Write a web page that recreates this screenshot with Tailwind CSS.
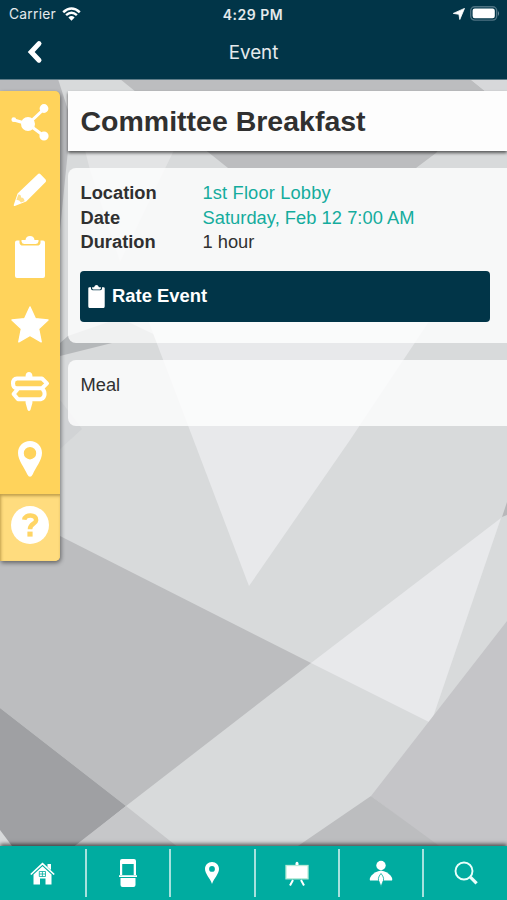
<!DOCTYPE html>
<html lang="en">
<head>
<meta charset="utf-8">
<meta name="viewport" content="width=device-width, initial-scale=1">
<title>Event</title>
<script src="https://cdn.jsdelivr.net/npm/@tailwindcss/browser@4"></script>
</head>
<body class="h-[900px] w-[507px] overflow-hidden font-['Liberation_Sans',Arial,sans-serif] text-[#303030]">
<div class="relative isolate flex h-[900px] w-[507px] flex-col overflow-hidden">
  <!-- faceted backdrop -->
  <svg class="absolute inset-0 -z-10" width="507" height="900" viewBox="0 0 507 900">
    <rect width="507" height="900" fill="#d8dadb"/>
    <path d="M0 79H58L68 110V150L60 230 0 230Z" fill="#b9babd"/>
    <path d="M120 79H470L486 92 436 153 416 168H228L208 152 136 92Z" fill="#bcbdbf"/>
    <path d="M470 79H507V95H490Z" fill="#d7d8da"/>
    <path d="M85 150H174L150 200 120 262 90 170Z" fill="#e3e4e5"/>
    <path d="M60 343 68 336 120 318 172 343H112L60 356Z" fill="#b5b8ba"/>
    <path d="M60 343V449L82 429 60 400Z" fill="#d1d3d5"/>
    <path d="M148 320 249 586 350 440 430 320Z" fill="#e8e9eb"/>
    <path d="M0 510 60 536 311 663 126 806 0 708Z" fill="#bcbdbf"/>
    <path d="M0 708 126 806 76 846H12L0 830Z" fill="#9fa0a3"/>
    <path d="M126 806 179 848H72Z" fill="#c6c7c9"/>
    <path d="M311 663 501 518 431 723Z" fill="#e8e9eb"/>
    <path d="M507 621 371 796 440 848H507Z" fill="#c5c5c8"/>
    <path d="M371 796 295 848H442Z" fill="#bcbdbf"/>
    <path d="M507 502 502 517 507 515Z" fill="#b7b8ba"/>
  </svg>

  <header class="h-[79px] shrink-0 bg-[#013548] font-[Inter,sans-serif] text-white/90 shadow-[0_1px_0_#5e7c88]">
    <div class="grid h-[27px] grid-cols-3 items-center pr-[7px] pl-[9px] pt-px text-[13.5px]">
      <div class="flex items-center gap-[6px]"><span class="text-[13.8px] tracking-[0.25px]">Carrier</span>
        <svg class="-mt-px" width="19" height="14" viewBox="0 0 19 14" fill="none" stroke="#fff" stroke-width="2.5"><path d="M1.2 5.2Q9.5-2.3 17.8 5.2M4.1 8.1Q9.5 3.3 14.9 8.1"/><path d="M6.4 10.5Q9.5 7.7 12.6 10.5L9.5 13.7Z" fill="#fff" stroke="none"/></svg>
      </div>
      <div class="-ml-[3px] text-center text-[14px] font-semibold tracking-[0.5px] whitespace-nowrap">4:29 PM</div>
      <div class="-mt-px flex items-center justify-end gap-[5px]">
        <svg width="12" height="12" viewBox="0 0 12 12"><path d="M11.5.4 6.8 11.5 5.9 6.3.3 5.4Z" fill="#fff" stroke="#fff" stroke-width=".8" stroke-linejoin="round"/></svg>
        <svg width="30" height="15" viewBox="0 0 30 15"><rect x=".7" y=".7" width="26" height="13.4" rx="4" fill="none" stroke="#4d7282" stroke-width="1.4"/><rect x="2.6" y="2.6" width="22.2" height="9.6" rx="2.2" fill="#fff"/><path d="M28 5Q30 7.5 28 10Z" fill="#71909d"/></svg>
      </div>
    </div>
    <div class="grid h-[52px] grid-cols-3 items-center">
      <svg class="-mt-[2px] ml-[27px]" width="16" height="24" viewBox="0 0 16 24" fill="none" stroke="#fff" stroke-width="5" stroke-linecap="round"><path d="M12 3.6 4.2 12 12 20.2"/></svg>
      <h1 class="pt-px text-center text-[18.8px]">Event</h1>
    </div>
  </header>

  <main class="flex min-h-0 flex-1 items-start gap-2 pt-[12px]">
    <nav class="flex w-[60px] flex-col overflow-hidden rounded-r-[5px] bg-[#ffd35b] pt-px shadow-[1px_2px_4px_#00000077]">
      <div class="flex h-[67px] items-center justify-center"><svg class="-mt-1" width="40" height="40" viewBox="0 0 40 40" fill="#fff" stroke="#fff" stroke-width="2"><path d="M4 16 18 20 34 5M18 20 34 32" fill="none" stroke-width="3"/><circle cx="3.8" cy="15.7" r="1.4"/><circle cx="18" cy="20" r="6"/><circle cx="34" cy="4.5" r="3.4"/><circle cx="34" cy="32" r="3.6"/></svg></div>
      <div class="flex h-[67px] items-center justify-center"><svg class="-mt-[5px]" width="34" height="34" viewBox="0 0 34 34"><path d="M24.8 1.2Q26.2 0 27.5 1.3L32.6 6.6Q33.8 8 32.4 9.3L13.2 28.4 1.8 33Q.4 33.3.8 31.8L4.6 20.6Z" fill="#fff"/><path d="M5.4 21.6Q8.2 21.4 8 24.4 11.2 24.2 11.6 28.2L8 29.6Q6.6 27 3.4 26.8Z" fill="#ffd35b" opacity=".7"/></svg></div>
      <div class="flex h-[67px] items-center justify-center"><svg class="-mt-[5px]" width="30" height="42" viewBox="0 0 30 42"><path d="M2 4.5H4.5V6.5Q4.5 9.6 8 9.6H22Q25.5 9.6 25.5 6.5V4.5H28Q30 4.5 30 6.5V40Q30 42 28 42H2Q0 42 0 40V6.5Q0 4.5 2 4.5Z" fill="#fff"/><path d="M6.5 4H10.5Q11 0 15 0T19.5 4H23.5V5.5Q23 8 20.5 8H9.5Q7 8 6.5 5.5Z" fill="#fff"/></svg></div>
      <div class="flex h-[67px] items-center justify-center"><svg class="-mt-[5px]" width="38" height="37" viewBox="0 0 38 37"><path d="M19 1 24.3 12.6 37 14 27.6 22.8 30.2 35.8 19 29.4 7.8 35.8 10.4 22.8 1 14 13.7 12.6Z" fill="#fff" stroke="#fff" stroke-width="1.4" stroke-linejoin="round"/></svg></div>
      <div class="flex h-[67px] items-center justify-center"><svg class="-mt-[5px]" width="40" height="39" viewBox="0 0 40 39" fill="none" stroke="#fff" stroke-width="4" stroke-linejoin="round"><path d="M7 6.5H32L37 11.4 32 16.2H7Q3 16 3 11.4T7 6.5ZM32 17Q34.6 18.2 34.6 22T31 27.2H8L3.6 22 8 16.8"/><path d="M15.6 6V3.5Q16 0 19 0T22.4 3.5V6ZM15.6 27H22.4V31L20.4 38Q19 40 17.6 38L15.6 31Z" fill="#fff" stroke="none"/></svg></div>
      <div class="flex h-[67px] items-center justify-center"><svg class="-mt-[4px]" width="24" height="36" viewBox="0 0 24 36"><path fill-rule="evenodd" d="M12 0C5 0 0 5.2 0 12C0 19 6.5 27 9.2 33.2Q12 38.5 14.8 33.2C17.5 27 24 19 24 12C24 5.2 19 0 12 0ZM12 6A6.2 6.2 0 1 1 12 18.4A6.2 6.2 0 0 1 12 6Z" fill="#fff"/></svg></div>
      <div class="flex h-[67px] items-center justify-center bg-[#ffdc7e] shadow-[inset_1px_2px_3px_#8a6b2288]"><svg class="-mt-[6px]" width="38" height="38" viewBox="0 0 38 38"><circle cx="19" cy="19" r="19" fill="#fff"/><path d="M13.3 13.8C14 8 25.5 8 25.1 14.2C25 18 19 17.5 19 23.2" fill="none" stroke="#ffd565" stroke-width="4.6"/><rect x="16.4" y="25.6" width="5.2" height="5" fill="#ffd565"/></svg></div>
    </nav>

    <div class="flex flex-1 flex-col">
      <h2 class="flex h-[60px] items-center bg-[#fdfdfd] pt-px pl-[12.5px] text-[28.5px] font-bold whitespace-nowrap shadow-[0_2px_3px_#00000099]">Committee Breakfast</h2>
      <section class="mt-[17px] h-[175px] rounded-l-[8px] bg-white/80 pt-[13px] pr-[17px] pl-[12px] text-[18.3px] leading-[24.5px]">
        <dl class="grid grid-cols-[122px_1fr] pl-[0.5px]">
          <dt class="font-bold">Location</dt><dd class="text-[#14ac9d] tracking-[0.15px]">1st Floor Lobby</dd>
          <dt class="font-bold">Date</dt><dd class="text-[#14ac9d] tracking-[0.04px]">Saturday, Feb 12 7:00 AM</dd>
          <dt class="font-bold">Duration</dt><dd>1 hour</dd>
        </dl>
        <button class="mt-[16px] flex h-[51px] w-full items-center gap-[7px] rounded-[4px] bg-[#013548] pl-[8px] font-bold text-white">
          <svg width="17" height="23" viewBox="0 0 30 42" fill="#fff"><path d="M2 4H5V7Q5 9.5 8 9.5H22Q25 9.5 25 7V4H28Q30 4 30 6V39Q30 42 28 42H2Q0 42 0 39V6Q0 4 2 4Z"/><path d="M7 4H10.5Q12 0 15 0T19.5 4H23V6Q23 8 21 8H9Q7 8 7 6Z"/></svg>
          <span class="pt-px text-[18.4px]">Rate Event</span>
        </button>
      </section>
      <section class="mt-[17px] h-[66px] rounded-l-[8px] bg-white/80 pt-[13px] pl-[12.5px] text-[18.3px] leading-[24.5px]">Meal</section>
    </div>
  </main>

  <footer class="grid h-[54px] shrink-0 grid-cols-[87px_84px_84.5px_84px_84.5px_1fr] bg-[#00aca0] py-[3px] shadow-[0_-2px_4px_#00000099]">
    <div class="flex items-center justify-center border-r-2 border-white/65"><svg width="25" height="23" viewBox="0 0 25 23" fill="#fff"><path d="M.8 12.5 12.5 1.6 24.2 12.5" fill="none" stroke="#fff" stroke-width="1.7"/><path d="M17.5 2H21V8L17.5 5ZM3.5 12.5 12.5 4.2 21.5 12.5V22.5H15.5V16.5H10V22.5H3.5Z"/><path d="M9.3 9.5H15.5V14.5H9.3ZM12.4 9.5V14.5M9.3 12H15.5" fill="none" stroke="#00aca0" stroke-width=".8"/></svg></div>
    <div class="flex items-center justify-center border-r-2 border-white/65"><svg width="18" height="28" viewBox="0 0 18 28"><path fill-rule="evenodd" d="M3 0H15Q17 0 17 2V16H1V2Q1 0 3 0ZM3.2 5V16H14.7V5Z" fill="#fff"/><path d="M0 16.2H18V18H0ZM1.5 19H16.5V26Q16.5 28 14.5 28H3.5Q1.5 28 1.5 26Z" fill="#fff"/></svg></div>
    <div class="flex items-center justify-center border-r-2 border-white/65"><svg class="-mt-px" width="14" height="22" viewBox="0 0 14 22"><path fill-rule="evenodd" d="M7 0C3 0 0 3 0 7C0 12 5 16 7 22C9 16 14 12 14 7C14 3 11 0 7 0ZM7 4A2.9 2.9 0 1 1 7 9.8A2.9 2.9 0 0 1 7 4Z" fill="#fff"/></svg></div>
    <div class="flex items-center justify-center border-r-2 border-white/65"><svg width="24" height="25" viewBox="0 0 24 25" fill="#fff"><rect x="1" y="4.5" width="22" height="13.3" stroke="#b9ebd8" stroke-width="1.3"/><path d="M10.5 4V2Q12-.5 13.5 2V4Z"/><path d="M8 19 5 24.5M16 19 19 24.5" fill="none" stroke="#fff" stroke-width="2"/></svg></div>
    <div class="flex items-center justify-center border-r-2 border-white/65"><svg width="24" height="27" viewBox="0 0 24 27"><circle cx="12" cy="5.5" r="4.7" fill="#fff"/><path d="M12 10.5Q6 11.5 2.5 15.5 0 18.5 1 20.5H23Q24 18.5 21.5 15.5 18 11.5 12 10.5Z" fill="#fff"/><path d="M12 13.5Q7.6 18.5 10.5 22.5L12 27 13.5 22.5Q16.4 18.5 12 13.5Z" fill="#fff" stroke="#00aca0" stroke-width=".8"/></svg></div>
    <div class="flex items-center justify-center"><svg width="24" height="24" viewBox="0 0 24 24" fill="none" stroke="#e9fffb"><circle cx="10" cy="10" r="8.5" stroke-width="1.9"/><path d="M16.4 16.2 22.6 22.4" stroke-width="3.2"/></svg></div>
  </footer>
</div>
</body>
</html>
